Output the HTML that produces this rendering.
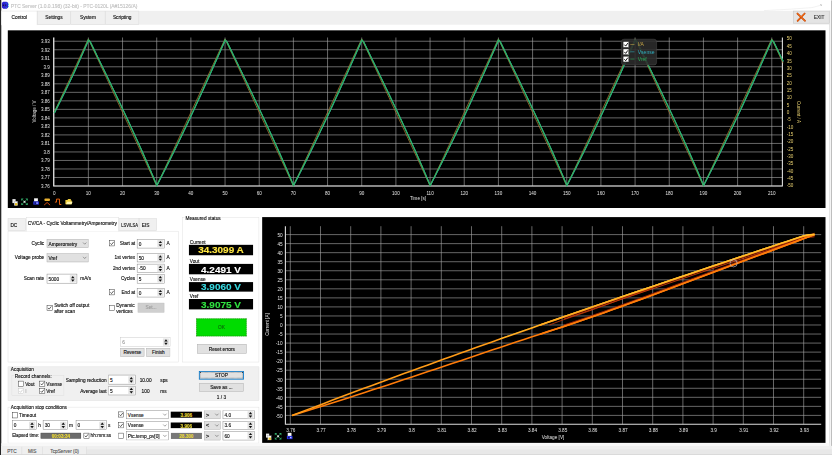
<!DOCTYPE html>
<html lang="en"><head><meta charset="utf-8"><title>PTC Server</title>
<style>

html,body{margin:0;padding:0;background:#fff;width:832px;height:455px;overflow:hidden;}
body{width:832px;height:455px;overflow:hidden;position:relative;}
#app{position:absolute;left:0;top:0;width:1920px;height:1050px;overflow:hidden;transform-origin:0 0;transform:scale(0.433333);font-family:"Liberation Sans",sans-serif;font-size:11px;color:#0c0c0c;line-height:1;-webkit-text-stroke:0.28px currentColor;}
.a{position:absolute;box-sizing:border-box;white-space:nowrap;}
.t{position:absolute;white-space:nowrap;line-height:14px;height:14px;}
.r{text-align:right;}
.c{text-align:center;}
.tab{position:absolute;box-sizing:border-box;white-space:nowrap;overflow:hidden;background:#f0f0f0;border:1px solid #d9d9d9;text-align:center;}
.tabsel{background:#fff;border-bottom:none;}
.inp{position:absolute;box-sizing:border-box;background:#fff;border:1px solid #7a7a7a;}
.inp .v{position:absolute;left:3px;top:50%;margin-top:-6.5px;line-height:14px;}
.cmb{position:absolute;box-sizing:border-box;background:#e1e1e1;border:1px solid #adadad;}
.cmb .v{position:absolute;left:3px;top:50%;margin-top:-6.5px;line-height:14px;}
.btn{position:absolute;box-sizing:border-box;background:#e1e1e1;border:1px solid #adadad;text-align:center;}
.cb{position:absolute;box-sizing:border-box;background:#fff;border:1px solid #333;width:13px;height:13px;}
.disp{position:absolute;box-sizing:border-box;background:#000;text-align:center;font-weight:bold;}
.grp{position:absolute;box-sizing:border-box;border:1px solid #dcdcdc;}
svg{position:absolute;overflow:visible;}

</style></head><body><div id="app">
<div class="a" style="left:0px;top:0px;width:3px;height:1051px;background:#262626"></div>
<svg style="left:4px;top:3px" width="18" height="18" viewBox="0 0 18 18"><path d="M3.5 1h7.5l3.8 2.6v10.6l-3.2 2.8H3.5L0.6 14.4V3.4z" fill="#2c24d4"/><circle cx="3.6" cy="9" r="1.5" fill="#06062a"/><circle cx="8.6" cy="9" r="1.5" fill="#0a2a30"/><path d="M14.4 5.4h2.4v2.4h-2.4zM14.4 10.4h2.4v2.4h-2.4zM9.6 3.6h1.6v1.6H9.6zM9.6 13h1.6v1.6H9.6z" fill="#28c8d8"/></svg>
<div class="t" style="left:25px;top:7px;font-size:11.4px;color:#c0c0c0">PTC Server (1.0.0.198) (32-bit) - PTC-0120L (A#15126/A)</div>
<div class="a" style="left:3px;top:25px;width:1911px;height:32px;background:#f0f0f0"></div>
<div class="a" style="left:1914px;top:24px;width:2px;height:1008px;background:#d4d4d4"></div>
<div class="a" style="left:1918px;top:1px;width:2px;height:1028px;background:#b4b4b4"></div>
<svg style="left:0;top:0" width="1920" height="30" viewBox="0 0 832 13"><path d="M764 10.6L790 9.2L812 7.6L821 5.2" stroke="#ececec" stroke-width="0.7" fill="none"/><path d="M820 4.6l1.6 0.2l-0.4 1.2" stroke="#9a9a9a" stroke-width="0.5" fill="none"/></svg>
<div class="tab tabsel" style="left:3px;top:25px;width:83px;height:33px;line-height:31px">Control</div>
<div class="tab" style="left:86px;top:25px;width:77px;height:32px;line-height:31px">Settings</div>
<div class="tab" style="left:163px;top:25px;width:80px;height:32px;line-height:31px">System</div>
<div class="tab" style="left:243px;top:25px;width:78px;height:32px;line-height:31px">Scripting</div>
<div class="a" style="left:1830px;top:25px;width:84px;height:29px;background:#e4e4e4;border:1px solid #c0c0c0"></div>
<svg style="left:1838px;top:29px" width="22" height="22" viewBox="0 0 10 10"><path d="M1 1 L9 8.6 M8.6 1 L1.2 8.8" stroke="#b84008" stroke-width="1.8" stroke-linecap="round" fill="none"/><path d="M1 1 L9 8.6 M8.6 1 L1.2 8.8" stroke="#f26a14" stroke-width="1.1" stroke-linecap="round" fill="none"/></svg>
<div class="t" style="left:1878px;top:33px;color:#333">EXIT</div>
<div class="a" style="left:18px;top:70px;width:1887px;height:410px;background:#000"></div>
<svg style="left:0;top:0" width="1920" height="1050" viewBox="0 0 832 455">
<path d="M53.6 186.00H782.4M53.6 177.49H782.4M53.6 168.97H782.4M53.6 160.46H782.4M53.6 151.94H782.4M53.6 143.43H782.4M53.6 134.91H782.4M53.6 126.40H782.4M53.6 117.88H782.4M53.6 109.37H782.4M53.6 100.85H782.4M53.6 92.34H782.4M53.6 83.82H782.4M53.6 75.31H782.4M53.6 66.79H782.4M53.6 58.28H782.4M53.6 49.76H782.4M53.6 41.25H782.4M54.20 37.5V186.0M88.37 37.5V186.0M122.54 37.5V186.0M156.71 37.5V186.0M190.88 37.5V186.0M225.05 37.5V186.0M259.22 37.5V186.0M293.39 37.5V186.0M327.56 37.5V186.0M361.73 37.5V186.0M395.90 37.5V186.0M430.07 37.5V186.0M464.24 37.5V186.0M498.41 37.5V186.0M532.58 37.5V186.0M566.75 37.5V186.0M600.92 37.5V186.0M635.09 37.5V186.0M669.26 37.5V186.0M703.43 37.5V186.0M737.60 37.5V186.0M771.77 37.5V186.0" stroke="#a6a6a6" stroke-width="0.62" fill="none"/>
<path d="M53.6 37.5V186.0H782.4V37.5" stroke="#dcdcdc" stroke-width="1.1" fill="none"/>
<polyline points="54.20,112.40 55.91,108.73 57.62,105.05 59.33,101.38 61.03,97.70 62.74,94.03 64.45,90.35 66.16,86.68 67.87,83.00 69.58,79.33 71.28,75.65 72.99,71.98 74.70,68.30 76.41,64.62 78.12,60.95 79.83,57.28 81.54,53.60 83.24,49.93 84.95,46.25 86.66,42.58 88.37,38.90 90.08,42.58 91.79,46.25 93.50,49.93 95.20,53.60 96.91,57.28 98.62,60.95 100.33,64.62 102.04,68.30 103.75,71.98 105.45,75.65 107.16,79.33 108.87,83.00 110.58,86.68 112.29,90.35 114.00,94.03 115.71,97.70 117.41,101.38 119.12,105.05 120.83,108.73 122.54,112.40 124.25,116.08 125.96,119.75 127.67,123.43 129.37,127.10 131.08,130.78 132.79,134.45 134.50,138.12 136.21,141.80 137.92,145.48 139.62,149.15 141.33,152.82 143.04,156.50 144.75,160.18 146.46,163.85 148.17,167.53 149.88,171.20 151.58,174.88 153.29,178.55 155.00,182.23 156.71,185.90 158.42,182.23 160.13,178.55 161.84,174.88 163.54,171.20 165.25,167.53 166.96,163.85 168.67,160.18 170.38,156.50 172.09,152.82 173.80,149.15 175.50,145.48 177.21,141.80 178.92,138.12 180.63,134.45 182.34,130.78 184.05,127.10 185.75,123.43 187.46,119.75 189.17,116.08 190.88,112.40 192.59,108.73 194.30,105.05 196.01,101.38 197.71,97.70 199.42,94.03 201.13,90.35 202.84,86.68 204.55,83.00 206.26,79.33 207.96,75.65 209.67,71.98 211.38,68.30 213.09,64.62 214.80,60.95 216.51,57.28 218.22,53.60 219.92,49.93 221.63,46.25 223.34,42.58 225.05,38.90 226.76,42.58 228.47,46.25 230.18,49.93 231.88,53.60 233.59,57.28 235.30,60.95 237.01,64.62 238.72,68.30 240.43,71.98 242.13,75.65 243.84,79.33 245.55,83.00 247.26,86.68 248.97,90.35 250.68,94.03 252.39,97.70 254.09,101.38 255.80,105.05 257.51,108.73 259.22,112.40 260.93,116.08 262.64,119.75 264.35,123.43 266.05,127.10 267.76,130.78 269.47,134.45 271.18,138.12 272.89,141.80 274.60,145.48 276.31,149.15 278.01,152.82 279.72,156.50 281.43,160.18 283.14,163.85 284.85,167.53 286.56,171.20 288.26,174.88 289.97,178.55 291.68,182.23 293.39,185.90 295.10,182.23 296.81,178.55 298.52,174.88 300.22,171.20 301.93,167.53 303.64,163.85 305.35,160.18 307.06,156.50 308.77,152.82 310.47,149.15 312.18,145.48 313.89,141.80 315.60,138.12 317.31,134.45 319.02,130.78 320.73,127.10 322.43,123.43 324.14,119.75 325.85,116.08 327.56,112.40 329.27,108.73 330.98,105.05 332.69,101.38 334.39,97.70 336.10,94.03 337.81,90.35 339.52,86.68 341.23,83.00 342.94,79.33 344.64,75.65 346.35,71.98 348.06,68.30 349.77,64.62 351.48,60.95 353.19,57.28 354.90,53.60 356.60,49.93 358.31,46.25 360.02,42.58 361.73,38.90 363.44,42.58 365.15,46.25 366.86,49.93 368.56,53.60 370.27,57.28 371.98,60.95 373.69,64.62 375.40,68.30 377.11,71.98 378.81,75.65 380.52,79.33 382.23,83.00 383.94,86.68 385.65,90.35 387.36,94.03 389.07,97.70 390.77,101.38 392.48,105.05 394.19,108.73 395.90,112.40 397.61,116.08 399.32,119.75 401.03,123.43 402.73,127.10 404.44,130.78 406.15,134.45 407.86,138.12 409.57,141.80 411.28,145.48 412.98,149.15 414.69,152.82 416.40,156.50 418.11,160.18 419.82,163.85 421.53,167.53 423.24,171.20 424.94,174.88 426.65,178.55 428.36,182.23 430.07,185.90 431.78,182.23 433.49,178.55 435.20,174.88 436.90,171.20 438.61,167.53 440.32,163.85 442.03,160.18 443.74,156.50 445.45,152.82 447.15,149.15 448.86,145.48 450.57,141.80 452.28,138.12 453.99,134.45 455.70,130.78 457.41,127.10 459.11,123.43 460.82,119.75 462.53,116.08 464.24,112.40 465.95,108.73 467.66,105.05 469.37,101.38 471.07,97.70 472.78,94.03 474.49,90.35 476.20,86.68 477.91,83.00 479.62,79.33 481.32,75.65 483.03,71.98 484.74,68.30 486.45,64.62 488.16,60.95 489.87,57.28 491.58,53.60 493.28,49.93 494.99,46.25 496.70,42.58 498.41,38.90 500.12,42.58 501.83,46.25 503.54,49.93 505.24,53.60 506.95,57.28 508.66,60.95 510.37,64.62 512.08,68.30 513.79,71.98 515.50,75.65 517.20,79.33 518.91,83.00 520.62,86.68 522.33,90.35 524.04,94.03 525.75,97.70 527.45,101.38 529.16,105.05 530.87,108.73 532.58,112.40 534.29,116.08 536.00,119.75 537.71,123.43 539.41,127.10 541.12,130.78 542.83,134.45 544.54,138.12 546.25,141.80 547.96,145.48 549.66,149.15 551.37,152.82 553.08,156.50 554.79,160.18 556.50,163.85 558.21,167.53 559.92,171.20 561.62,174.88 563.33,178.55 565.04,182.23 566.75,185.90 568.46,182.23 570.17,178.55 571.88,174.88 573.58,171.20 575.29,167.53 577.00,163.85 578.71,160.18 580.42,156.50 582.13,152.82 583.84,149.15 585.54,145.48 587.25,141.80 588.96,138.12 590.67,134.45 592.38,130.78 594.09,127.10 595.79,123.43 597.50,119.75 599.21,116.08 600.92,112.40 602.63,108.73 604.34,105.05 606.05,101.38 607.75,97.70 609.46,94.03 611.17,90.35 612.88,86.68 614.59,83.00 616.30,79.33 618.00,75.65 619.71,71.98 621.42,68.30 623.13,64.62 624.84,60.95 626.55,57.28 628.26,53.60 629.96,49.93 631.67,46.25 633.38,42.58 635.09,38.90 636.80,42.58 638.51,46.25 640.22,49.93 641.92,53.60 643.63,57.28 645.34,60.95 647.05,64.62 648.76,68.30 650.47,71.98 652.18,75.65 653.88,79.33 655.59,83.00 657.30,86.68 659.01,90.35 660.72,94.03 662.43,97.70 664.13,101.38 665.84,105.05 667.55,108.73 669.26,112.40 670.97,116.08 672.68,119.75 674.39,123.43 676.09,127.10 677.80,130.78 679.51,134.45 681.22,138.12 682.93,141.80 684.64,145.48 686.35,149.15 688.05,152.82 689.76,156.50 691.47,160.18 693.18,163.85 694.89,167.53 696.60,171.20 698.30,174.88 700.01,178.55 701.72,182.23 703.43,185.90 705.14,182.23 706.85,178.55 708.56,174.88 710.26,171.20 711.97,167.53 713.68,163.85 715.39,160.18 717.10,156.50 718.81,152.82 720.51,149.15 722.22,145.48 723.93,141.80 725.64,138.12 727.35,134.45 729.06,130.78 730.77,127.10 732.47,123.43 734.18,119.75 735.89,116.08 737.60,112.40 739.31,108.73 741.02,105.05 742.73,101.38 744.43,97.70 746.14,94.03 747.85,90.35 749.56,86.68 751.27,83.00 752.98,79.33 754.69,75.65 756.39,71.98 758.10,68.30 759.81,64.62 761.52,60.95 763.23,57.28 764.94,53.60 766.64,49.93 768.35,46.25 770.06,42.58 771.77,38.90 773.48,42.58 775.19,46.25 776.90,49.93 778.60,53.60 780.31,57.28 782.02,60.95 783.05,63.16" stroke="#b08038" stroke-width="0.75" fill="none" stroke-linejoin="miter"/>
<polyline points="54.20,112.95 55.91,109.53 57.62,106.11 59.33,102.69 61.03,99.25 62.74,95.79 64.45,92.32 66.16,88.83 67.87,85.30 69.58,81.75 71.28,78.17 72.99,74.55 74.70,70.90 76.41,67.07 78.12,63.24 79.83,59.39 81.54,55.53 83.24,51.67 84.95,47.79 86.66,43.91 88.37,39.89 90.08,41.63 91.79,45.14 93.50,48.64 95.20,52.15 96.91,55.66 98.62,59.17 100.33,62.69 102.04,66.21 103.75,69.73 105.45,73.26 107.16,76.79 108.87,80.33 110.58,83.88 112.29,87.43 114.00,90.99 115.71,94.56 117.41,98.15 119.12,101.74 120.83,105.34 122.54,108.96 124.25,112.59 125.96,116.23 127.67,119.89 129.37,123.56 131.08,127.25 132.79,130.96 134.50,134.68 136.21,138.43 137.92,142.20 139.62,145.98 141.33,149.80 143.04,153.63 144.75,157.49 146.46,161.38 148.17,165.30 149.88,169.25 151.58,173.23 153.29,177.25 155.00,181.30 156.71,185.39 158.42,182.09 160.13,178.77 161.84,175.43 163.54,172.07 165.25,168.70 166.96,165.30 168.67,161.89 170.38,158.45 172.09,155.00 173.80,151.53 175.50,148.04 177.21,144.53 178.92,141.01 180.63,137.46 182.34,133.90 184.05,130.32 185.75,126.72 187.46,123.11 189.17,119.48 190.88,115.83 192.59,112.16 194.30,108.48 196.01,104.79 197.71,101.08 199.42,97.35 201.13,93.61 202.84,89.86 204.55,86.09 206.26,82.31 207.96,78.52 209.67,74.72 211.38,70.90 213.09,67.07 214.80,63.24 216.51,59.39 218.22,55.53 219.92,51.67 221.63,47.79 223.34,43.91 225.05,39.89 226.76,41.63 228.47,45.14 230.18,48.64 231.88,52.15 233.59,55.66 235.30,59.17 237.01,62.69 238.72,66.21 240.43,69.73 242.13,73.26 243.84,76.79 245.55,80.33 247.26,83.88 248.97,87.43 250.68,90.99 252.39,94.56 254.09,98.15 255.80,101.74 257.51,105.34 259.22,108.96 260.93,112.59 262.64,116.23 264.35,119.89 266.05,123.56 267.76,127.25 269.47,130.96 271.18,134.68 272.89,138.43 274.60,142.20 276.31,145.98 278.01,149.80 279.72,153.63 281.43,157.49 283.14,161.38 284.85,165.30 286.56,169.25 288.26,173.23 289.97,177.25 291.68,181.30 293.39,185.39 295.10,182.09 296.81,178.77 298.52,175.43 300.22,172.07 301.93,168.70 303.64,165.30 305.35,161.89 307.06,158.45 308.77,155.00 310.47,151.53 312.18,148.04 313.89,144.53 315.60,141.01 317.31,137.46 319.02,133.90 320.73,130.32 322.43,126.72 324.14,123.11 325.85,119.48 327.56,115.83 329.27,112.16 330.98,108.48 332.69,104.79 334.39,101.08 336.10,97.35 337.81,93.61 339.52,89.86 341.23,86.09 342.94,82.31 344.64,78.52 346.35,74.72 348.06,70.90 349.77,67.07 351.48,63.24 353.19,59.39 354.90,55.53 356.60,51.67 358.31,47.79 360.02,43.91 361.73,39.89 363.44,41.63 365.15,45.14 366.86,48.64 368.56,52.15 370.27,55.66 371.98,59.17 373.69,62.69 375.40,66.21 377.11,69.73 378.81,73.26 380.52,76.79 382.23,80.33 383.94,83.88 385.65,87.43 387.36,90.99 389.07,94.56 390.77,98.15 392.48,101.74 394.19,105.34 395.90,108.96 397.61,112.59 399.32,116.23 401.03,119.89 402.73,123.56 404.44,127.25 406.15,130.96 407.86,134.68 409.57,138.43 411.28,142.20 412.98,145.98 414.69,149.80 416.40,153.63 418.11,157.49 419.82,161.38 421.53,165.30 423.24,169.25 424.94,173.23 426.65,177.25 428.36,181.30 430.07,185.39 431.78,182.09 433.49,178.77 435.20,175.43 436.90,172.07 438.61,168.70 440.32,165.30 442.03,161.89 443.74,158.45 445.45,155.00 447.15,151.53 448.86,148.04 450.57,144.53 452.28,141.01 453.99,137.46 455.70,133.90 457.41,130.32 459.11,126.72 460.82,123.11 462.53,119.48 464.24,115.83 465.95,112.16 467.66,108.48 469.37,104.79 471.07,101.08 472.78,97.35 474.49,93.61 476.20,89.86 477.91,86.09 479.62,82.31 481.32,78.52 483.03,74.72 484.74,70.90 486.45,67.07 488.16,63.24 489.87,59.39 491.58,55.53 493.28,51.67 494.99,47.79 496.70,43.91 498.41,39.89 500.12,41.63 501.83,45.14 503.54,48.64 505.24,52.15 506.95,55.66 508.66,59.17 510.37,62.69 512.08,66.21 513.79,69.73 515.50,73.26 517.20,76.79 518.91,80.33 520.62,83.88 522.33,87.43 524.04,90.99 525.75,94.56 527.45,98.15 529.16,101.74 530.87,105.34 532.58,108.96 534.29,112.59 536.00,116.23 537.71,119.89 539.41,123.56 541.12,127.25 542.83,130.96 544.54,134.68 546.25,138.43 547.96,142.20 549.66,145.98 551.37,149.80 553.08,153.63 554.79,157.49 556.50,161.38 558.21,165.30 559.92,169.25 561.62,173.23 563.33,177.25 565.04,181.30 566.75,185.39 568.46,182.09 570.17,178.77 571.88,175.43 573.58,172.07 575.29,168.70 577.00,165.30 578.71,161.89 580.42,158.45 582.13,155.00 583.84,151.53 585.54,148.04 587.25,144.53 588.96,141.01 590.67,137.46 592.38,133.90 594.09,130.32 595.79,126.72 597.50,123.11 599.21,119.48 600.92,115.83 602.63,112.16 604.34,108.48 606.05,104.79 607.75,101.08 609.46,97.35 611.17,93.61 612.88,89.86 614.59,86.09 616.30,82.31 618.00,78.52 619.71,74.72 621.42,70.90 623.13,67.07 624.84,63.24 626.55,59.39 628.26,55.53 629.96,51.67 631.67,47.79 633.38,43.91 635.09,39.89 636.80,41.63 638.51,45.14 640.22,48.64 641.92,52.15 643.63,55.66 645.34,59.17 647.05,62.69 648.76,66.21 650.47,69.73 652.18,73.26 653.88,76.79 655.59,80.33 657.30,83.88 659.01,87.43 660.72,90.99 662.43,94.56 664.13,98.15 665.84,101.74 667.55,105.34 669.26,108.96 670.97,112.59 672.68,116.23 674.39,119.89 676.09,123.56 677.80,127.25 679.51,130.96 681.22,134.68 682.93,138.43 684.64,142.20 686.35,145.98 688.05,149.80 689.76,153.63 691.47,157.49 693.18,161.38 694.89,165.30 696.60,169.25 698.30,173.23 700.01,177.25 701.72,181.30 703.43,185.39 705.14,182.09 706.85,178.77 708.56,175.43 710.26,172.07 711.97,168.70 713.68,165.30 715.39,161.89 717.10,158.45 718.81,155.00 720.51,151.53 722.22,148.04 723.93,144.53 725.64,141.01 727.35,137.46 729.06,133.90 730.77,130.32 732.47,126.72 734.18,123.11 735.89,119.48 737.60,115.83 739.31,112.16 741.02,108.48 742.73,104.79 744.43,101.08 746.14,97.35 747.85,93.61 749.56,89.86 751.27,86.09 752.98,82.31 754.69,78.52 756.39,74.72 758.10,70.90 759.81,67.07 761.52,63.24 763.23,59.39 764.94,55.53 766.64,51.67 768.35,47.79 770.06,43.91 771.77,39.89 773.48,41.63 775.19,45.14 776.90,48.64 778.60,52.15 780.31,55.66 782.02,59.17 783.05,61.28" stroke="#30b8c8" stroke-width="0.9" fill="none" transform="translate(0.3 0.2)"/>
<polyline points="54.20,112.95 55.91,109.53 57.62,106.11 59.33,102.69 61.03,99.25 62.74,95.79 64.45,92.32 66.16,88.83 67.87,85.30 69.58,81.75 71.28,78.17 72.99,74.55 74.70,70.90 76.41,67.07 78.12,63.24 79.83,59.39 81.54,55.53 83.24,51.67 84.95,47.79 86.66,43.91 88.37,39.89 90.08,41.63 91.79,45.14 93.50,48.64 95.20,52.15 96.91,55.66 98.62,59.17 100.33,62.69 102.04,66.21 103.75,69.73 105.45,73.26 107.16,76.79 108.87,80.33 110.58,83.88 112.29,87.43 114.00,90.99 115.71,94.56 117.41,98.15 119.12,101.74 120.83,105.34 122.54,108.96 124.25,112.59 125.96,116.23 127.67,119.89 129.37,123.56 131.08,127.25 132.79,130.96 134.50,134.68 136.21,138.43 137.92,142.20 139.62,145.98 141.33,149.80 143.04,153.63 144.75,157.49 146.46,161.38 148.17,165.30 149.88,169.25 151.58,173.23 153.29,177.25 155.00,181.30 156.71,185.39 158.42,182.09 160.13,178.77 161.84,175.43 163.54,172.07 165.25,168.70 166.96,165.30 168.67,161.89 170.38,158.45 172.09,155.00 173.80,151.53 175.50,148.04 177.21,144.53 178.92,141.01 180.63,137.46 182.34,133.90 184.05,130.32 185.75,126.72 187.46,123.11 189.17,119.48 190.88,115.83 192.59,112.16 194.30,108.48 196.01,104.79 197.71,101.08 199.42,97.35 201.13,93.61 202.84,89.86 204.55,86.09 206.26,82.31 207.96,78.52 209.67,74.72 211.38,70.90 213.09,67.07 214.80,63.24 216.51,59.39 218.22,55.53 219.92,51.67 221.63,47.79 223.34,43.91 225.05,39.89 226.76,41.63 228.47,45.14 230.18,48.64 231.88,52.15 233.59,55.66 235.30,59.17 237.01,62.69 238.72,66.21 240.43,69.73 242.13,73.26 243.84,76.79 245.55,80.33 247.26,83.88 248.97,87.43 250.68,90.99 252.39,94.56 254.09,98.15 255.80,101.74 257.51,105.34 259.22,108.96 260.93,112.59 262.64,116.23 264.35,119.89 266.05,123.56 267.76,127.25 269.47,130.96 271.18,134.68 272.89,138.43 274.60,142.20 276.31,145.98 278.01,149.80 279.72,153.63 281.43,157.49 283.14,161.38 284.85,165.30 286.56,169.25 288.26,173.23 289.97,177.25 291.68,181.30 293.39,185.39 295.10,182.09 296.81,178.77 298.52,175.43 300.22,172.07 301.93,168.70 303.64,165.30 305.35,161.89 307.06,158.45 308.77,155.00 310.47,151.53 312.18,148.04 313.89,144.53 315.60,141.01 317.31,137.46 319.02,133.90 320.73,130.32 322.43,126.72 324.14,123.11 325.85,119.48 327.56,115.83 329.27,112.16 330.98,108.48 332.69,104.79 334.39,101.08 336.10,97.35 337.81,93.61 339.52,89.86 341.23,86.09 342.94,82.31 344.64,78.52 346.35,74.72 348.06,70.90 349.77,67.07 351.48,63.24 353.19,59.39 354.90,55.53 356.60,51.67 358.31,47.79 360.02,43.91 361.73,39.89 363.44,41.63 365.15,45.14 366.86,48.64 368.56,52.15 370.27,55.66 371.98,59.17 373.69,62.69 375.40,66.21 377.11,69.73 378.81,73.26 380.52,76.79 382.23,80.33 383.94,83.88 385.65,87.43 387.36,90.99 389.07,94.56 390.77,98.15 392.48,101.74 394.19,105.34 395.90,108.96 397.61,112.59 399.32,116.23 401.03,119.89 402.73,123.56 404.44,127.25 406.15,130.96 407.86,134.68 409.57,138.43 411.28,142.20 412.98,145.98 414.69,149.80 416.40,153.63 418.11,157.49 419.82,161.38 421.53,165.30 423.24,169.25 424.94,173.23 426.65,177.25 428.36,181.30 430.07,185.39 431.78,182.09 433.49,178.77 435.20,175.43 436.90,172.07 438.61,168.70 440.32,165.30 442.03,161.89 443.74,158.45 445.45,155.00 447.15,151.53 448.86,148.04 450.57,144.53 452.28,141.01 453.99,137.46 455.70,133.90 457.41,130.32 459.11,126.72 460.82,123.11 462.53,119.48 464.24,115.83 465.95,112.16 467.66,108.48 469.37,104.79 471.07,101.08 472.78,97.35 474.49,93.61 476.20,89.86 477.91,86.09 479.62,82.31 481.32,78.52 483.03,74.72 484.74,70.90 486.45,67.07 488.16,63.24 489.87,59.39 491.58,55.53 493.28,51.67 494.99,47.79 496.70,43.91 498.41,39.89 500.12,41.63 501.83,45.14 503.54,48.64 505.24,52.15 506.95,55.66 508.66,59.17 510.37,62.69 512.08,66.21 513.79,69.73 515.50,73.26 517.20,76.79 518.91,80.33 520.62,83.88 522.33,87.43 524.04,90.99 525.75,94.56 527.45,98.15 529.16,101.74 530.87,105.34 532.58,108.96 534.29,112.59 536.00,116.23 537.71,119.89 539.41,123.56 541.12,127.25 542.83,130.96 544.54,134.68 546.25,138.43 547.96,142.20 549.66,145.98 551.37,149.80 553.08,153.63 554.79,157.49 556.50,161.38 558.21,165.30 559.92,169.25 561.62,173.23 563.33,177.25 565.04,181.30 566.75,185.39 568.46,182.09 570.17,178.77 571.88,175.43 573.58,172.07 575.29,168.70 577.00,165.30 578.71,161.89 580.42,158.45 582.13,155.00 583.84,151.53 585.54,148.04 587.25,144.53 588.96,141.01 590.67,137.46 592.38,133.90 594.09,130.32 595.79,126.72 597.50,123.11 599.21,119.48 600.92,115.83 602.63,112.16 604.34,108.48 606.05,104.79 607.75,101.08 609.46,97.35 611.17,93.61 612.88,89.86 614.59,86.09 616.30,82.31 618.00,78.52 619.71,74.72 621.42,70.90 623.13,67.07 624.84,63.24 626.55,59.39 628.26,55.53 629.96,51.67 631.67,47.79 633.38,43.91 635.09,39.89 636.80,41.63 638.51,45.14 640.22,48.64 641.92,52.15 643.63,55.66 645.34,59.17 647.05,62.69 648.76,66.21 650.47,69.73 652.18,73.26 653.88,76.79 655.59,80.33 657.30,83.88 659.01,87.43 660.72,90.99 662.43,94.56 664.13,98.15 665.84,101.74 667.55,105.34 669.26,108.96 670.97,112.59 672.68,116.23 674.39,119.89 676.09,123.56 677.80,127.25 679.51,130.96 681.22,134.68 682.93,138.43 684.64,142.20 686.35,145.98 688.05,149.80 689.76,153.63 691.47,157.49 693.18,161.38 694.89,165.30 696.60,169.25 698.30,173.23 700.01,177.25 701.72,181.30 703.43,185.39 705.14,182.09 706.85,178.77 708.56,175.43 710.26,172.07 711.97,168.70 713.68,165.30 715.39,161.89 717.10,158.45 718.81,155.00 720.51,151.53 722.22,148.04 723.93,144.53 725.64,141.01 727.35,137.46 729.06,133.90 730.77,130.32 732.47,126.72 734.18,123.11 735.89,119.48 737.60,115.83 739.31,112.16 741.02,108.48 742.73,104.79 744.43,101.08 746.14,97.35 747.85,93.61 749.56,89.86 751.27,86.09 752.98,82.31 754.69,78.52 756.39,74.72 758.10,70.90 759.81,67.07 761.52,63.24 763.23,59.39 764.94,55.53 766.64,51.67 768.35,47.79 770.06,43.91 771.77,39.89 773.48,41.63 775.19,45.14 776.90,48.64 778.60,52.15 780.31,55.66 782.02,59.17 783.05,61.28" stroke="#2fb266" stroke-width="1.3" fill="none" stroke-linejoin="miter"/>
<g font-family='"Liberation Sans", sans-serif' font-size="4.6" fill="#e4e4e4">
<text x="49.9" y="188.00" text-anchor="end">3.76</text>
<text x="49.9" y="179.49" text-anchor="end">3.77</text>
<text x="49.9" y="170.97" text-anchor="end">3.78</text>
<text x="49.9" y="162.46" text-anchor="end">3.79</text>
<text x="49.9" y="153.94" text-anchor="end">3.8</text>
<text x="49.9" y="145.43" text-anchor="end">3.81</text>
<text x="49.9" y="136.91" text-anchor="end">3.82</text>
<text x="49.9" y="128.40" text-anchor="end">3.83</text>
<text x="49.9" y="119.88" text-anchor="end">3.84</text>
<text x="49.9" y="111.37" text-anchor="end">3.85</text>
<text x="49.9" y="102.85" text-anchor="end">3.86</text>
<text x="49.9" y="94.34" text-anchor="end">3.87</text>
<text x="49.9" y="85.82" text-anchor="end">3.88</text>
<text x="49.9" y="77.31" text-anchor="end">3.89</text>
<text x="49.9" y="68.79" text-anchor="end">3.9</text>
<text x="49.9" y="60.28" text-anchor="end">3.91</text>
<text x="49.9" y="51.76" text-anchor="end">3.92</text>
<text x="49.9" y="43.25" text-anchor="end">3.93</text>
<text x="54.20" y="195" text-anchor="middle">0</text>
<text x="88.37" y="195" text-anchor="middle">10</text>
<text x="122.54" y="195" text-anchor="middle">20</text>
<text x="156.71" y="195" text-anchor="middle">30</text>
<text x="190.88" y="195" text-anchor="middle">40</text>
<text x="225.05" y="195" text-anchor="middle">50</text>
<text x="259.22" y="195" text-anchor="middle">60</text>
<text x="293.39" y="195" text-anchor="middle">70</text>
<text x="327.56" y="195" text-anchor="middle">80</text>
<text x="361.73" y="195" text-anchor="middle">90</text>
<text x="395.90" y="195" text-anchor="middle">100</text>
<text x="430.07" y="195" text-anchor="middle">110</text>
<text x="464.24" y="195" text-anchor="middle">120</text>
<text x="498.41" y="195" text-anchor="middle">130</text>
<text x="532.58" y="195" text-anchor="middle">140</text>
<text x="566.75" y="195" text-anchor="middle">150</text>
<text x="600.92" y="195" text-anchor="middle">160</text>
<text x="635.09" y="195" text-anchor="middle">170</text>
<text x="669.26" y="195" text-anchor="middle">180</text>
<text x="703.43" y="195" text-anchor="middle">190</text>
<text x="737.60" y="195" text-anchor="middle">200</text>
<text x="771.77" y="195" text-anchor="middle">210</text>
<text x="418" y="200.5" text-anchor="middle">Time [s]</text>
<text transform="translate(36.1 111.4) rotate(-90)" text-anchor="middle">Voltage / V</text>
</g>
<g font-family='"Liberation Sans", sans-serif' font-size="4.6" fill="#e8d070">
<text x="786.8" y="187.50">-50</text>
<text x="786.8" y="180.15">-45</text>
<text x="786.8" y="172.80">-40</text>
<text x="786.8" y="165.45">-35</text>
<text x="786.8" y="158.10">-30</text>
<text x="786.8" y="150.75">-25</text>
<text x="786.8" y="143.40">-20</text>
<text x="786.8" y="136.05">-15</text>
<text x="786.8" y="128.70">-10</text>
<text x="786.8" y="121.35">-5</text>
<text x="786.8" y="114.00">0</text>
<text x="786.8" y="106.65">5</text>
<text x="786.8" y="99.30">10</text>
<text x="786.8" y="91.95">15</text>
<text x="786.8" y="84.60">20</text>
<text x="786.8" y="77.25">25</text>
<text x="786.8" y="69.90">30</text>
<text x="786.8" y="62.55">35</text>
<text x="786.8" y="55.20">40</text>
<text x="786.8" y="47.85">45</text>
<text x="786.8" y="40.50">50</text>
<text transform="translate(797.2 112) rotate(90)" text-anchor="middle">Current / A</text>
</g>
<rect x="621.4" y="39.2" width="35.2" height="25.8" rx="2.6" fill="#2c2c2c" fill-opacity="0.88" stroke="#4c4c4c" stroke-width="0.5"/>
<rect x="623.1" y="41.65" width="5.7" height="5.7" fill="#fff" stroke="#222" stroke-width="0.4"/>
<path d="M624.3 44.60l1.4 1.5l2.1-3" stroke="#000" stroke-width="0.9" fill="none"/>
<path d="M630.3 44.50h4.2" stroke="#c8a848" stroke-width="0.55"/>
<text x="637.8" y="46.30" font-family='"Liberation Sans", sans-serif' font-size="5" fill="#c8a848">I/A</text>
<rect x="623.1" y="48.95" width="5.7" height="5.7" fill="#fff" stroke="#222" stroke-width="0.4"/>
<path d="M624.3 51.90l1.4 1.5l2.1-3" stroke="#000" stroke-width="0.9" fill="none"/>
<path d="M630.3 51.80h4.2" stroke="#30b0c0" stroke-width="0.55"/>
<text x="637.8" y="53.60" font-family='"Liberation Sans", sans-serif' font-size="5" fill="#30b0c0">Vsense</text>
<rect x="623.1" y="56.25" width="5.7" height="5.7" fill="#fff" stroke="#222" stroke-width="0.4"/>
<path d="M624.3 59.20l1.4 1.5l2.1-3" stroke="#000" stroke-width="0.9" fill="none"/>
<path d="M630.3 59.10h4.2" stroke="#2aa858" stroke-width="0.55"/>
<text x="637.8" y="60.90" font-family='"Liberation Sans", sans-serif' font-size="5" fill="#2aa858">Vref</text>
<rect x="12.4" y="199.1" width="3.2" height="4" fill="#e8e8e8"/><rect x="14.200000000000001" y="201.29999999999998" width="3.4" height="4.2" fill="#f4f4f4" stroke="#999" stroke-width="0.3"/><rect x="15.0" y="203.1" width="2.4" height="2.2" fill="#e8c020"/><path d="M22.0 199.29999999999998l5 5M27.0 199.29999999999998l-5 5" stroke="#2a8a50" stroke-width="0.9"/><path d="M21.2 198.5h2.4l-2.4 2.4zM27.799999999999997 198.5h-2.4l2.4 2.4zM21.2 205.1h2.4l-2.4 -2.4zM27.799999999999997 205.1h-2.4l2.4 -2.4z" fill="#30a868"/><rect x="23.599999999999998" y="200.9" width="1.8" height="1.8" fill="#dcdcdc"/><rect x="34.1" y="198.29999999999998" width="3.8" height="3.2" fill="#f6f6f6"/><rect x="33.3" y="201.4" width="5.6" height="3.2" fill="#2a34e4"/><rect x="34.6" y="202.29999999999998" width="1.2" height="1.6" fill="#101040"/><rect x="36.4" y="202.5" width="1.4" height="1.2" fill="#c8ccf8"/><rect x="44.4" y="198.5" width="5.6" height="2.6" rx="1" fill="#e8b030"/><path d="M44.1 205.1l3-2.6l3 2.6" stroke="#e05010" stroke-width="0.9" fill="none"/><path d="M54.9 202.1h1.6v-3h3v5.4h1.8" stroke="#e8600c" stroke-width="1" fill="none"/><path d="M65.4 200.1h2l0.8 -1h2.6v1.4h1v3.8h-6.4z" fill="#f0d040"/><path d="M66.0 204.29999999999998l1.2-2.6h5.4l-1.2 2.6z" fill="#fff6b0"/>
</svg>
<div class="a" style="left:18px;top:533px;width:394px;height:303px;background:#fff;border:1px solid #dcdcdc"></div>
<div class="tab" style="left:18px;top:504px;width:42px;height:29px;line-height:29px;text-align:left;padding-left:5px">DC</div>
<div class="tab tabsel" style="left:60px;top:501px;width:214px;height:33px;line-height:29px">CV/CA - Cyclic Voltammetry/Amperometry</div>
<div class="tab" style="left:274px;top:504px;width:47px;height:29px;line-height:29px;text-align:left;padding-left:5px"><span style="display:inline-block;transform:scaleX(0.86);transform-origin:0 50%">LSV/LSA</span></div>
<div class="tab" style="left:321px;top:504px;width:41px;height:29px;line-height:29px;text-align:left;padding-left:5px">EIS</div>
<div class="t r" style="right:1818px;top:555px;">Cyclic</div>
<div class="cmb" style="left:108px;top:552px;width:96px;height:20px;background:#e1e1e1;border-color:#adadad"><span class="v">Amperometry</span><svg style="right:3.5px;top:50%;margin-top:-3px" width="9" height="6" viewBox="0 0 9 6"><path d="M0.7 0.7L4.5 4.6L8.3 0.7" stroke="#444" stroke-width="1.1" fill="none"/></svg></div>
<div class="t r" style="right:1818px;top:587px;">Voltage probe</div>
<div class="cmb" style="left:108px;top:585px;width:96px;height:20px;background:#e1e1e1;border-color:#adadad"><span class="v">Vref</span><svg style="right:3.5px;top:50%;margin-top:-3px" width="9" height="6" viewBox="0 0 9 6"><path d="M0.7 0.7L4.5 4.6L8.3 0.7" stroke="#444" stroke-width="1.1" fill="none"/></svg></div>
<div class="t r" style="right:1818px;top:636px;">Scan rate</div>
<div class="inp" style="left:108px;top:632px;width:70px;height:22px;border-color:#7a7a7a"><span class="v" style="color:#111">5000</span><svg style="right:2px;top:50%;margin-top:-8.5px" width="14" height="17" viewBox="0 0 14 17"><rect x="0" y="0" width="14" height="17" rx="1" fill="#e4e4e4"/><path d="M3 7L7 2L11 7zM3 10L7 15L11 10z" fill="#111"/></svg></div>
<div class="t" style="left:185px;top:636px;">mA/s</div>
<div class="cb" style="left:108px;top:704px;border-color:#222"><svg style="left:0;top:0" width="11" height="11" viewBox="0 0 11 11"><path d="M1.8 5.6L4.4 8.4L9.4 2.2" stroke="#111" stroke-width="1.5" fill="none"/></svg></div>
<div class="t" style="left:125px;top:697px;">Switch off output</div>
<div class="t" style="left:125px;top:711px;">after scan</div>
<div class="cb" style="left:252px;top:555px;border-color:#222"><svg style="left:0;top:0" width="11" height="11" viewBox="0 0 11 11"><path d="M1.8 5.6L4.4 8.4L9.4 2.2" stroke="#111" stroke-width="1.5" fill="none"/></svg></div>
<div class="t r" style="right:1608px;top:555px;">Start at</div>
<div class="inp" style="left:316px;top:552px;width:64px;height:21px;border-color:#7a7a7a"><span class="v" style="color:#111">0</span><svg style="right:2px;top:50%;margin-top:-8.5px" width="14" height="17" viewBox="0 0 14 17"><rect x="0" y="0" width="14" height="17" rx="1" fill="#e4e4e4"/><path d="M3 7L7 2L11 7zM3 10L7 15L11 10z" fill="#111"/></svg></div>
<div class="t" style="left:384px;top:555px;">A</div>
<div class="t r" style="right:1608px;top:587px;">1st vertex</div>
<div class="inp" style="left:316px;top:585px;width:64px;height:20px;border-color:#7a7a7a"><span class="v" style="color:#111">50</span><svg style="right:2px;top:50%;margin-top:-8.5px" width="14" height="17" viewBox="0 0 14 17"><rect x="0" y="0" width="14" height="17" rx="1" fill="#e4e4e4"/><path d="M3 7L7 2L11 7zM3 10L7 15L11 10z" fill="#111"/></svg></div>
<div class="t" style="left:384px;top:587px;">A</div>
<div class="t r" style="right:1608px;top:612px;">2nd vertex</div>
<div class="inp" style="left:316px;top:609px;width:64px;height:20px;border-color:#7a7a7a"><span class="v" style="color:#111">-50</span><svg style="right:2px;top:50%;margin-top:-8.5px" width="14" height="17" viewBox="0 0 14 17"><rect x="0" y="0" width="14" height="17" rx="1" fill="#e4e4e4"/><path d="M3 7L7 2L11 7zM3 10L7 15L11 10z" fill="#111"/></svg></div>
<div class="t" style="left:384px;top:612px;">A</div>
<div class="t r" style="right:1608px;top:636px;">Cycles</div>
<div class="inp" style="left:316px;top:633px;width:64px;height:21px;border-color:#7a7a7a"><span class="v" style="color:#111">5</span><svg style="right:2px;top:50%;margin-top:-8.5px" width="14" height="17" viewBox="0 0 14 17"><rect x="0" y="0" width="14" height="17" rx="1" fill="#e4e4e4"/><path d="M3 7L7 2L11 7zM3 10L7 15L11 10z" fill="#111"/></svg></div>
<div class="cb" style="left:252px;top:668px;border-color:#222"><svg style="left:0;top:0" width="11" height="11" viewBox="0 0 11 11"><path d="M1.8 5.6L4.4 8.4L9.4 2.2" stroke="#111" stroke-width="1.5" fill="none"/></svg></div>
<div class="t r" style="right:1608px;top:668px;">End at</div>
<div class="inp" style="left:316px;top:665px;width:64px;height:21px;border-color:#7a7a7a"><span class="v" style="color:#111">0</span><svg style="right:2px;top:50%;margin-top:-8.5px" width="14" height="17" viewBox="0 0 14 17"><rect x="0" y="0" width="14" height="17" rx="1" fill="#e4e4e4"/><path d="M3 7L7 2L11 7zM3 10L7 15L11 10z" fill="#111"/></svg></div>
<div class="t" style="left:384px;top:668px;">A</div>
<div class="cb" style="left:252px;top:704px;border-color:#222"></div>
<div class="t" style="left:268px;top:697px;">Dynamic</div>
<div class="t" style="left:268px;top:711px;">vertices</div>
<div class="btn" style="left:318px;top:699px;width:61px;height:22px;line-height:20px;color:#9c9c9c;background:#cfcfcf;border-color:#c4c4c4">Set...</div>
<div class="inp" style="left:278px;top:778px;width:115px;height:22px;border-color:#c4c4c4"><span class="v" style="color:#9a9a9a">6</span><svg style="right:2px;top:50%;margin-top:-8.5px" width="14" height="17" viewBox="0 0 14 17"><rect x="0" y="0" width="14" height="17" rx="1" fill="#e4e4e4"/><path d="M3 7L7 2L11 7zM3 10L7 15L11 10z" fill="#111"/></svg></div>
<div class="btn" style="left:278px;top:803px;width:55px;height:20px;line-height:18px;">Reverse</div>
<div class="btn" style="left:338px;top:803px;width:55px;height:20px;line-height:18px;">Finish</div>
<div class="grp" style="left:421px;top:502px;width:177px;height:334px;"></div>
<div class="t" style="left:426px;top:496px;background:#fff;padding:0 2px">Measured status</div>
<div class="t" style="left:438px;top:552px;">Current</div>
<div class="disp" style="left:436px;top:565px;width:148px;height:24px;line-height:25px;font-size:23px;color:#ffe640">34.3099 A</div>
<div class="t" style="left:438px;top:596px;">Vout</div>
<div class="disp" style="left:436px;top:609px;width:148px;height:24px;line-height:25px;font-size:23px;color:#ffffff">4.2491 V</div>
<div class="t" style="left:438px;top:638px;">Vsense</div>
<div class="disp" style="left:436px;top:651px;width:148px;height:22px;line-height:23px;font-size:23px;color:#38d8e0">3.9060 V</div>
<div class="t" style="left:438px;top:677px;">Vref</div>
<div class="disp" style="left:436px;top:690px;width:148px;height:24px;line-height:25px;font-size:23px;color:#30e040">3.9075 V</div>
<div class="a c" style="left:453px;top:735px;width:116px;height:41px;background:#00dc00;border:1px dashed #2a5a10;line-height:39px;color:#0a6a0a">OK</div>
<div class="btn" style="left:455px;top:794px;width:114px;height:22px;line-height:20px;">Reset errors</div>
<div class="a" style="left:18px;top:846px;width:580px;height:79px;background:#f0f0f0;border:1px solid #e2e2e2"></div>
<div class="t" style="left:25px;top:845px;">Acquisition</div>
<div class="grp" style="left:27px;top:866px;width:121px;height:47px;border-color:#dcdcdc"></div>
<div class="t" style="left:33px;top:861px;background:#f0f0f0;padding:0 1px">Record channels:</div>
<div class="cb" style="left:42px;top:879px;border-color:#222"></div>
<div class="t" style="left:58px;top:879px;">Vout</div>
<div class="cb" style="left:91px;top:879px;border-color:#222"><svg style="left:0;top:0" width="11" height="11" viewBox="0 0 11 11"><path d="M1.8 5.6L4.4 8.4L9.4 2.2" stroke="#111" stroke-width="1.5" fill="none"/></svg></div>
<div class="t" style="left:107px;top:879px;">Vsense</div>
<div class="cb" style="left:42px;top:896px;border-color:#bcbcbc"><svg style="left:0;top:0" width="11" height="11" viewBox="0 0 11 11"><path d="M1.8 5.6L4.4 8.4L9.4 2.2" stroke="#bcbcbc" stroke-width="1.5" fill="none"/></svg></div>
<div class="t" style="left:58px;top:896px;color:#b0b0b0;">I</div>
<div class="cb" style="left:91px;top:896px;border-color:#222"><svg style="left:0;top:0" width="11" height="11" viewBox="0 0 11 11"><path d="M1.8 5.6L4.4 8.4L9.4 2.2" stroke="#111" stroke-width="1.5" fill="none"/></svg></div>
<div class="t" style="left:107px;top:896px;">Vref</div>
<div class="t r" style="right:1674px;top:871px;">Sampling reduction</div>
<div class="inp" style="left:250px;top:865px;width:63px;height:22px;border-color:#7a7a7a"><span class="v" style="color:#111">5</span><svg style="right:2px;top:50%;margin-top:-8.5px" width="14" height="17" viewBox="0 0 14 17"><rect x="0" y="0" width="14" height="17" rx="1" fill="#e4e4e4"/><path d="M3 7L7 2L11 7zM3 10L7 15L11 10z" fill="#111"/></svg></div>
<div class="t r" style="right:1674px;top:895px;">Average last</div>
<div class="inp" style="left:250px;top:891px;width:63px;height:21px;border-color:#7a7a7a"><span class="v" style="color:#111">5</span><svg style="right:2px;top:50%;margin-top:-8.5px" width="14" height="17" viewBox="0 0 14 17"><rect x="0" y="0" width="14" height="17" rx="1" fill="#e4e4e4"/><path d="M3 7L7 2L11 7zM3 10L7 15L11 10z" fill="#111"/></svg></div>
<div class="t c" style="left:246px;width:180px;top:871px;">10.00</div>
<div class="t" style="left:370px;top:871px;">sps</div>
<div class="t c" style="left:246px;width:180px;top:895px;">100</div>
<div class="t" style="left:370px;top:895px;">ms</div>
<div class="btn" style="left:459px;top:856px;width:104px;height:20px;line-height:18px;border:2px solid #0a78c8;line-height:16px;outline:1px dotted #444;outline-offset:-4px">STOP</div>
<div class="btn" style="left:460px;top:884px;width:102px;height:20px;line-height:18px;">Save as ...</div>
<div class="t c" style="left:421px;width:180px;top:910px;">1 / 3</div>
<div class="grp" style="left:18px;top:939px;width:580px;height:84px;"></div>
<div class="t" style="left:24px;top:933px;background:#fff;padding:0 1px">Acquisition stop conditions</div>
<div class="cb" style="left:28px;top:952px;border-color:#222"></div>
<div class="t" style="left:44px;top:951px;">Timeout</div>
<div class="inp" style="left:28px;top:970px;width:56px;height:22px;border-color:#7a7a7a"><span class="v" style="color:#111">0</span><svg style="right:2px;top:50%;margin-top:-8.5px" width="14" height="17" viewBox="0 0 14 17"><rect x="0" y="0" width="14" height="17" rx="1" fill="#e4e4e4"/><path d="M3 7L7 2L11 7zM3 10L7 15L11 10z" fill="#111"/></svg></div>
<div class="t" style="left:88px;top:974px;">h</div>
<div class="inp" style="left:99px;top:970px;width:57px;height:22px;border-color:#7a7a7a"><span class="v" style="color:#111">30</span><svg style="right:2px;top:50%;margin-top:-8.5px" width="14" height="17" viewBox="0 0 14 17"><rect x="0" y="0" width="14" height="17" rx="1" fill="#e4e4e4"/><path d="M3 7L7 2L11 7zM3 10L7 15L11 10z" fill="#111"/></svg></div>
<div class="t" style="left:159px;top:974px;">m</div>
<div class="inp" style="left:175px;top:970px;width:71px;height:22px;border-color:#7a7a7a"><span class="v" style="color:#111">0</span><svg style="right:2px;top:50%;margin-top:-8.5px" width="14" height="17" viewBox="0 0 14 17"><rect x="0" y="0" width="14" height="17" rx="1" fill="#e4e4e4"/><path d="M3 7L7 2L11 7zM3 10L7 15L11 10z" fill="#111"/></svg></div>
<div class="t" style="left:249px;top:974px;">s</div>
<div class="t" style="left:28px;top:998px;font-size:10.3px">Elapsed time:</div>
<div class="disp" style="left:94px;top:999px;width:93px;height:13px;line-height:13px;font-size:10.6px;color:#f0dc30;background:#6c6c6c;border:1px solid #555">00:03:34</div>
<div class="cb" style="left:193px;top:999px;border-color:#222"><svg style="left:0;top:0" width="11" height="11" viewBox="0 0 11 11"><path d="M1.8 5.6L4.4 8.4L9.4 2.2" stroke="#111" stroke-width="1.5" fill="none"/></svg></div>
<div class="t" style="left:209px;top:998px;">hh:mm:ss</div>
<div class="cb" style="left:273px;top:950px;border-color:#222"><svg style="left:0;top:0" width="11" height="11" viewBox="0 0 11 11"><path d="M1.8 5.6L4.4 8.4L9.4 2.2" stroke="#111" stroke-width="1.5" fill="none"/></svg></div>
<div class="cmb" style="left:291px;top:947px;width:98px;height:20px;background:#fff;border-color:#7a7a7a"><span class="v">Vsense</span><svg style="right:3.5px;top:50%;margin-top:-3px" width="9" height="6" viewBox="0 0 9 6"><path d="M0.7 0.7L4.5 4.6L8.3 0.7" stroke="#444" stroke-width="1.1" fill="none"/></svg></div>
<div class="disp" style="left:394px;top:950px;width:72px;height:14px;line-height:16px;font-size:10.6px;color:#e8d838;background:#000">3.906</div>
<div class="cmb" style="left:471px;top:947px;width:38px;height:20px;background:#e1e1e1;border-color:#adadad"><span class="v"><span style="font-size:14px;line-height:12px">&gt;</span></span><svg style="right:3.5px;top:50%;margin-top:-3px" width="9" height="6" viewBox="0 0 9 6"><path d="M0.7 0.7L4.5 4.6L8.3 0.7" stroke="#444" stroke-width="1.1" fill="none"/></svg></div>
<div class="inp" style="left:514px;top:947px;width:74px;height:20px;border-color:#7a7a7a"><span class="v" style="color:#111">4.0</span><svg style="right:2px;top:50%;margin-top:-8.5px" width="14" height="17" viewBox="0 0 14 17"><rect x="0" y="0" width="14" height="17" rx="1" fill="#e4e4e4"/><path d="M3 7L7 2L11 7zM3 10L7 15L11 10z" fill="#111"/></svg></div>
<div class="cb" style="left:273px;top:975px;border-color:#222"><svg style="left:0;top:0" width="11" height="11" viewBox="0 0 11 11"><path d="M1.8 5.6L4.4 8.4L9.4 2.2" stroke="#111" stroke-width="1.5" fill="none"/></svg></div>
<div class="cmb" style="left:291px;top:972px;width:98px;height:19px;background:#fff;border-color:#7a7a7a"><span class="v">Vsense</span><svg style="right:3.5px;top:50%;margin-top:-3px" width="9" height="6" viewBox="0 0 9 6"><path d="M0.7 0.7L4.5 4.6L8.3 0.7" stroke="#444" stroke-width="1.1" fill="none"/></svg></div>
<div class="disp" style="left:394px;top:975px;width:72px;height:13px;line-height:16px;font-size:10.6px;color:#e8d838;background:#000">3.906</div>
<div class="cmb" style="left:471px;top:972px;width:38px;height:19px;background:#e1e1e1;border-color:#adadad"><span class="v"><span style="font-size:14px;line-height:12px">&lt;</span></span><svg style="right:3.5px;top:50%;margin-top:-3px" width="9" height="6" viewBox="0 0 9 6"><path d="M0.7 0.7L4.5 4.6L8.3 0.7" stroke="#444" stroke-width="1.1" fill="none"/></svg></div>
<div class="inp" style="left:514px;top:972px;width:74px;height:19px;border-color:#7a7a7a"><span class="v" style="color:#111">3.6</span><svg style="right:2px;top:50%;margin-top:-8.5px" width="14" height="17" viewBox="0 0 14 17"><rect x="0" y="0" width="14" height="17" rx="1" fill="#e4e4e4"/><path d="M3 7L7 2L11 7zM3 10L7 15L11 10z" fill="#111"/></svg></div>
<div class="cb" style="left:273px;top:999px;border-color:#222"></div>
<div class="cmb" style="left:291px;top:995px;width:98px;height:21px;background:#fff;border-color:#7a7a7a"><span class="v">Ptc.temp_pv[0]</span><svg style="right:3.5px;top:50%;margin-top:-3px" width="9" height="6" viewBox="0 0 9 6"><path d="M0.7 0.7L4.5 4.6L8.3 0.7" stroke="#444" stroke-width="1.1" fill="none"/></svg></div>
<div class="disp" style="left:394px;top:999px;width:72px;height:14px;line-height:16px;font-size:10.6px;color:#e8d838;background:#787878">28.300</div>
<div class="cmb" style="left:471px;top:995px;width:38px;height:21px;background:#e1e1e1;border-color:#adadad"><span class="v"><span style="font-size:14px;line-height:12px">&gt;</span></span><svg style="right:3.5px;top:50%;margin-top:-3px" width="9" height="6" viewBox="0 0 9 6"><path d="M0.7 0.7L4.5 4.6L8.3 0.7" stroke="#444" stroke-width="1.1" fill="none"/></svg></div>
<div class="inp" style="left:514px;top:995px;width:74px;height:21px;border-color:#7a7a7a"><span class="v" style="color:#111">60</span><svg style="right:2px;top:50%;margin-top:-8.5px" width="14" height="17" viewBox="0 0 14 17"><rect x="0" y="0" width="14" height="17" rx="1" fill="#e4e4e4"/><path d="M3 7L7 2L11 7zM3 10L7 15L11 10z" fill="#111"/></svg></div>
<div class="a" style="left:605px;top:501px;width:1300px;height:521px;background:#000"></div>
<svg style="left:0;top:0" width="1920" height="1050" viewBox="0 0 832 455">
<path d="M285.4 415.40H821.2M285.4 406.36H821.2M285.4 397.32H821.2M285.4 388.28H821.2M285.4 379.24H821.2M285.4 370.20H821.2M285.4 361.16H821.2M285.4 352.12H821.2M285.4 343.08H821.2M285.4 334.04H821.2M285.4 325.00H821.2M285.4 315.96H821.2M285.4 306.92H821.2M285.4 297.88H821.2M285.4 288.84H821.2M285.4 279.80H821.2M285.4 270.76H821.2M285.4 261.72H821.2M285.4 252.68H821.2M285.4 243.64H821.2M285.4 234.60H821.2M290.30 226.2V424.3M320.50 226.2V424.3M350.70 226.2V424.3M380.90 226.2V424.3M411.10 226.2V424.3M441.30 226.2V424.3M471.50 226.2V424.3M501.70 226.2V424.3M531.90 226.2V424.3M562.10 226.2V424.3M592.30 226.2V424.3M622.50 226.2V424.3M652.70 226.2V424.3M682.90 226.2V424.3M713.10 226.2V424.3M743.30 226.2V424.3M773.50 226.2V424.3M803.70 226.2V424.3" stroke="#a6a6a6" stroke-width="0.62" fill="none"/>
<path d="M285.4 226.2V424.3H821.2" stroke="#dcdcdc" stroke-width="1.1" fill="none"/>
<polyline points="564.0,319.1 572.0,316.3 580.0,313.6 588.0,310.8 596.0,308.1 604.0,305.3 612.0,302.6 620.0,299.8 628.0,297.1 636.0,294.4 644.0,291.7 652.0,289.0 660.0,286.3 668.0,283.6 676.0,280.9 684.0,278.2 692.0,275.5 700.0,272.8 708.0,270.1 716.0,267.4 724.0,264.8 732.0,262.1 740.0,259.4 748.0,256.8 756.0,254.1 764.0,251.4 772.0,248.8 780.0,246.1 788.0,243.5 796.0,240.8 803.0,238.5 809.0,237.2 814.5,236.8" stroke="#c84010" stroke-width="0.9" fill="none"/>
<polyline points="564.0,318.0 572.0,315.2 580.0,312.5 588.0,309.7 596.0,307.0 604.0,304.2 612.0,301.5 620.0,298.7 628.0,296.0 636.0,293.3 644.0,290.6 652.0,287.9 660.0,285.2 668.0,282.5 676.0,279.8 684.0,277.1 692.0,274.4 700.0,271.7 708.0,269.0 716.0,266.3 724.0,263.7 732.0,261.0 740.0,258.3 748.0,255.7 756.0,253.0 764.0,250.3 772.0,247.7 780.0,245.0 788.0,242.4 796.0,239.7 803.0,237.4 809.0,236.1 814.5,235.7" stroke="#8a1c04" stroke-width="0.9" fill="none"/>
<polyline points="564.0,325.0 572.0,322.3 580.0,319.6 588.0,316.9 596.0,314.1 604.0,311.3 612.0,308.4 620.0,305.5 628.0,302.6 636.0,299.7 644.0,296.8 652.0,293.8 660.0,290.8 668.0,287.8 676.0,284.8 684.0,281.9 692.0,278.8 700.0,275.8 708.0,272.8 716.0,269.8 724.0,266.9 732.0,263.9 740.0,260.9 748.0,257.9 756.0,254.9 764.0,252.0 772.0,249.0 780.0,246.0 788.0,243.1 796.0,240.2 804.0,237.1 810.0,234.9 814.5,233.2" stroke="#a82408" stroke-width="0.9" fill="none"/>
<polyline points="549.4,325 561.9,320.3 590,310.7 622,298.9 652.6,288.2" stroke="#c03408" stroke-width="0.8" fill="none"/>
<polyline points="292.0,415.4 300.0,413.1 308.0,410.6 316.0,408.0 324.0,405.5 332.0,403.0 340.0,400.4 348.0,397.9 356.0,395.3 364.0,392.7 372.0,390.1 380.0,387.5 388.0,384.9 396.0,382.2 404.0,379.6 412.0,377.0 420.0,374.3 428.0,371.6 436.0,368.9 444.0,366.3 452.0,363.6 460.0,360.9 468.0,358.2 476.0,355.5 484.0,352.8 492.0,350.1 500.0,347.4 508.0,344.7 516.0,342.1 524.0,339.4 532.0,336.8 540.0,334.2 548.0,331.6 556.0,329.0 564.0,326.4 572.0,323.7 580.0,321.0 588.0,318.3 596.0,315.5 604.0,312.7 612.0,309.8 620.0,306.9 628.0,304.0 636.0,301.1 644.0,298.2 652.0,295.2 660.0,292.2 668.0,289.2 676.0,286.2 684.0,283.3 692.0,280.2 700.0,277.2 708.0,274.2 716.0,271.2 724.0,268.3 732.0,265.3 740.0,262.3 748.0,259.3 756.0,256.3 764.0,253.4 772.0,250.4 780.0,247.4 788.0,244.5 796.0,241.6 804.0,238.5 810.0,236.3 814.5,234.6" stroke="#ff7c0a" stroke-width="1.55" fill="none" stroke-linejoin="round"/>
<polyline points="540.0,334.2 548.0,331.6 556.0,329.0 564.0,326.4 572.0,323.7 580.0,321.0 588.0,318.3 596.0,315.5 604.0,312.7 612.0,309.8 620.0,306.9 628.0,304.0 636.0,301.1 644.0,298.2 652.0,295.2 660.0,292.2 668.0,289.2 676.0,286.2 684.0,283.3 692.0,280.2 700.0,277.2 708.0,274.2 716.0,271.2 724.0,268.3 732.0,265.3 740.0,262.3 748.0,259.3 756.0,256.3 764.0,253.4 772.0,250.4 780.0,247.4 788.0,244.5 796.0,241.6 804.0,238.5 810.0,236.3 814.5,234.6" stroke="#ff7c0a" stroke-width="1.7" fill="none" stroke-linejoin="round"/>
<polyline points="292.0,415.4 300.0,412.5 308.0,409.4 316.0,406.4 324.0,403.4 332.0,400.3 340.0,397.3 348.0,394.3 356.0,391.3 364.0,388.3 372.0,385.4 380.0,382.4 388.0,379.5 396.0,376.5 404.0,373.6 412.0,370.7 420.0,367.8 428.0,364.9 436.0,362.0 444.0,359.1 452.0,356.2 460.0,353.3 468.0,350.5 476.0,347.6 484.0,344.8 492.0,342.0 500.0,339.1 508.0,336.3 516.0,333.5 524.0,330.7 532.0,327.9 540.0,325.1 548.0,322.3 556.0,319.6 564.0,316.8 572.0,314.0 580.0,311.3 588.0,308.5 596.0,305.8 604.0,303.0 612.0,300.3 620.0,297.5 628.0,294.8 636.0,292.1 644.0,289.4 652.0,286.7 660.0,284.0 668.0,281.3 676.0,278.6 684.0,275.9 692.0,273.2 700.0,270.5 708.0,267.8 716.0,265.1 724.0,262.5 732.0,259.8 740.0,257.1 748.0,254.5 756.0,251.8 764.0,249.1 772.0,246.5 780.0,243.8 788.0,241.2 796.0,238.5 803.0,236.2 809.0,234.9 814.5,234.5" stroke="#ff9c18" stroke-width="1.55" fill="none" stroke-linejoin="round"/>
<polyline points="540.0,325.1 548.0,322.3 556.0,319.6 564.0,316.8 572.0,314.0 580.0,311.3 588.0,308.5 596.0,305.8 604.0,303.0 612.0,300.3 620.0,297.5 628.0,294.8 636.0,292.1 644.0,289.4 652.0,286.7 660.0,284.0 668.0,281.3 676.0,278.6 684.0,275.9 692.0,273.2 700.0,270.5 708.0,267.8 716.0,265.1 724.0,262.5 732.0,259.8 740.0,257.1 748.0,254.5 756.0,251.8 764.0,249.1 772.0,246.5 780.0,243.8 788.0,241.2 796.0,238.5 803.0,236.2 809.0,234.9 814.5,234.5" stroke="#ff9c18" stroke-width="1.7" fill="none" stroke-linejoin="round"/>
<polyline points="500.0,338.8 508.0,336.0 516.0,333.2 524.0,330.4 532.0,327.6 540.0,324.8 548.0,322.0 556.0,319.2 564.0,316.4 572.0,313.7 580.0,310.9 588.0,308.2 596.0,305.4 604.0,302.7 612.0,299.9 620.0,297.2 628.0,294.5 636.0,291.7 644.0,289.0 652.0,286.3 660.0,283.6 668.0,280.9 676.0,278.2 684.0,275.5 692.0,272.8 700.0,270.1 708.0,267.5 716.0,264.8 724.0,262.1 732.0,259.4 740.0,256.8 748.0,254.1 756.0,251.4 764.0,248.8 772.0,246.1 780.0,243.5 788.0,240.8 796.0,238.2 803.0,235.8 809.0,234.6 814.5,234.2" stroke="#ffd038" stroke-width="0.55" fill="none"/>
<polyline points="620.0,297.3 628.0,294.6 636.0,291.9 644.0,289.2 652.0,286.5 660.0,283.8 668.0,281.1 676.0,278.4 684.0,275.7 692.0,273.0 700.0,270.3 708.0,267.6 716.0,264.9 724.0,262.3 732.0,259.6 740.0,256.9 748.0,254.3 756.0,251.6 764.0,248.9 772.0,246.3 780.0,243.6 788.0,241.0 796.0,238.3 803.0,236.0 809.0,234.7 814.5,234.3" stroke="#ffc830" stroke-width="0.8" fill="none"/>
<circle cx="733.6" cy="263.3" r="3.6" stroke="#c8c8d8" stroke-width="0.6" fill="none"/>
<g font-family='"Liberation Sans", sans-serif' font-size="4.7" fill="#e4e4e4">
<text x="282.6" y="417.70" text-anchor="end">-50</text>
<text x="282.6" y="408.66" text-anchor="end">-45</text>
<text x="282.6" y="399.62" text-anchor="end">-40</text>
<text x="282.6" y="390.58" text-anchor="end">-35</text>
<text x="282.6" y="381.54" text-anchor="end">-30</text>
<text x="282.6" y="372.50" text-anchor="end">-25</text>
<text x="282.6" y="363.46" text-anchor="end">-20</text>
<text x="282.6" y="354.42" text-anchor="end">-15</text>
<text x="282.6" y="345.38" text-anchor="end">-10</text>
<text x="282.6" y="336.34" text-anchor="end">-5</text>
<text x="282.6" y="327.30" text-anchor="end">0</text>
<text x="282.6" y="318.26" text-anchor="end">5</text>
<text x="282.6" y="309.22" text-anchor="end">10</text>
<text x="282.6" y="300.18" text-anchor="end">15</text>
<text x="282.6" y="291.14" text-anchor="end">20</text>
<text x="282.6" y="282.10" text-anchor="end">25</text>
<text x="282.6" y="273.06" text-anchor="end">30</text>
<text x="282.6" y="264.02" text-anchor="end">35</text>
<text x="282.6" y="254.98" text-anchor="end">40</text>
<text x="282.6" y="245.94" text-anchor="end">45</text>
<text x="282.6" y="236.90" text-anchor="end">50</text>
<text x="290.90" y="432.2" text-anchor="middle">3.76</text>
<text x="321.10" y="432.2" text-anchor="middle">3.77</text>
<text x="351.30" y="432.2" text-anchor="middle">3.78</text>
<text x="381.50" y="432.2" text-anchor="middle">3.79</text>
<text x="411.70" y="432.2" text-anchor="middle">3.8</text>
<text x="441.90" y="432.2" text-anchor="middle">3.81</text>
<text x="472.10" y="432.2" text-anchor="middle">3.82</text>
<text x="502.30" y="432.2" text-anchor="middle">3.83</text>
<text x="532.50" y="432.2" text-anchor="middle">3.84</text>
<text x="562.70" y="432.2" text-anchor="middle">3.85</text>
<text x="592.90" y="432.2" text-anchor="middle">3.86</text>
<text x="623.10" y="432.2" text-anchor="middle">3.87</text>
<text x="653.30" y="432.2" text-anchor="middle">3.88</text>
<text x="683.50" y="432.2" text-anchor="middle">3.89</text>
<text x="713.70" y="432.2" text-anchor="middle">3.9</text>
<text x="743.90" y="432.2" text-anchor="middle">3.91</text>
<text x="774.10" y="432.2" text-anchor="middle">3.92</text>
<text x="804.30" y="432.2" text-anchor="middle">3.93</text>
<text x="553" y="438.6" text-anchor="middle">Voltage [V]</text>
<text transform="translate(269 324.5) rotate(-90)" text-anchor="middle">Current [A]</text>
</g>
<rect x="266" y="433.6" width="3.2" height="4" fill="#e8e8e8"/><rect x="267.8" y="435.8" width="3.4" height="4.2" fill="#f4f4f4" stroke="#999" stroke-width="0.3"/><rect x="268.6" y="437.6" width="2.4" height="2.2" fill="#e8c020"/><path d="M275.6 433.8l5 5M280.6 433.8l-5 5" stroke="#2a8a50" stroke-width="0.9"/><path d="M274.8 433.0h2.4l-2.4 2.4zM281.4 433.0h-2.4l2.4 2.4zM274.8 439.6h2.4l-2.4 -2.4zM281.4 439.6h-2.4l2.4 -2.4z" fill="#30a868"/><rect x="277.2" y="435.40000000000003" width="1.8" height="1.8" fill="#dcdcdc"/><rect x="287.7" y="432.8" width="3.8" height="3.2" fill="#f6f6f6"/><rect x="286.9" y="435.90000000000003" width="5.6" height="3.2" fill="#2a34e4"/><rect x="288.2" y="436.8" width="1.2" height="1.6" fill="#101040"/><rect x="290.0" y="437.0" width="1.4" height="1.2" fill="#c8ccf8"/>
</svg>
<div class="a" style="left:3px;top:1023px;width:1911px;height:6px;background:#f8f8f8"></div>
<div class="a" style="left:3px;top:1029px;width:1917px;height:22px;background:#efefef"></div>
<div class="a" style="left:200px;top:1037px;width:1720px;height:14px;background:#e8e8e8"></div>
<div class="a" style="left:3px;top:1048px;width:1917px;height:3px;background:#d8d8d8"></div>
<div class="a c" style="left:5px;top:1031px;width:46px;height:20px;border-right:1px solid #d6d6d6;line-height:22px;font-size:11px;color:#555">PTC</div>
<div class="a c" style="left:51px;top:1031px;width:48px;height:20px;border-right:1px solid #d6d6d6;line-height:22px;font-size:11px;color:#555">MIS</div>
<div class="a c" style="left:99px;top:1031px;width:101px;height:20px;border-right:1px solid #d6d6d6;line-height:22px;font-size:11px;color:#555">TcpServer (0)</div>
</div></body></html>
